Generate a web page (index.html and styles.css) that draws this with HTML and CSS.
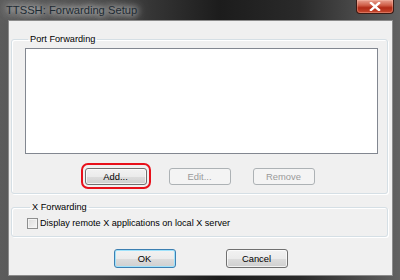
FILE: index.html
```html
<!DOCTYPE html>
<html lang="en">
<head>
  <meta charset="UTF-8">
  <title>TTSSH: Forwarding Setup</title>
  <link rel="stylesheet" href="styles.css">
</head>
<body>
  <div class="window">
    <div class="titlebar">
      <span class="title">TTSSH: Forwarding Setup</span>
      <span class="close-btn">
        <svg width="12" height="9" viewBox="0 0 12 9"><path d="M2 1 L10 8 M10 1 L2 8" stroke="#fff" stroke-width="2.4" stroke-linecap="square"/></svg>
      </span>
    </div>

    <div class="client">
      <fieldset class="group port-group">
        <legend>Port Forwarding</legend>
        <div class="listbox"></div>
        <div class="btn-row">
          <button class="btn add-btn">Add...</button>
          <button class="btn" disabled>Edit...</button>
          <button class="btn" disabled>Remove</button>
        </div>
      </fieldset>

      <fieldset class="group x-group">
        <legend>X Forwarding</legend>
        <label class="check-row">
          <span class="checkbox"></span>
          <span>Display remote X applications on local X server</span>
        </label>
      </fieldset>

      <div class="dialog-buttons">
        <button class="btn default-btn">OK</button>
        <button class="btn">Cancel</button>
      </div>
    </div>
  </div>
</body>
</html>
```

FILE: styles.css
```css
* { box-sizing: border-box; margin: 0; padding: 0; }
body {
  font-family: "Liberation Sans", Arial, sans-serif;
  font-size: 9.1px;
  color: #000;
  background: #3a3a3a;
}
.window {
  width: 400px;
  height: 280px;
  display: flex;
  flex-direction: column;
  padding: 0 7px 4px 8px;
  background: linear-gradient(90deg, #5c5c5c 0%, #484848 25%, #1c1c1c 55%, #2a2a2a 75%, #626262 100%);
}
.titlebar {
  height: 20px;
  display: flex;
  justify-content: space-between;
  align-items: flex-start;
  margin-left: -2px;
}
.title {
  font-size: 11.2px;
  line-height: 20px;
  color: #1d2a33;
  text-shadow: 0 0 6px #e8e8e8, 0 0 10px #d0d0d0, 0 0 16px #b0b0b0;
}
.close-btn {
  width: 38px;
  height: 14px;
  margin-right: -1px;
  display: flex;
  align-items: center;
  justify-content: center;
  border: 1px solid #3b1a14;
  border-top: none;
  border-radius: 0 0 4px 4px;
  background: linear-gradient(#e8a090 0%, #d0604a 40%, #b02a16 60%, #c84a30 100%);
  box-shadow: inset 0 0 0 1px rgba(255, 200, 180, 0.35);
}
.client {
  flex: 1;
  display: flex;
  flex-direction: column;
  background: #f0f0f0;
  border: 1px solid #8c8c8c;
  padding: 0 4px 0 2px;
}
.group {
  border: 1px solid #d5dfe5;
  border-radius: 3px;
  box-shadow: inset 1px 1px 0 #fff, 1px 1px 0 #fff;
  padding: 0;
}
.group legend {
  margin-left: 3px;
  padding: 0 2px;
  line-height: 13px;
  font-size: 9.2px;
  color: #000;
}
.port-group {
  margin-top: 12px;
  padding: 0 9px 8px 13px;
}
.listbox {
  margin-top: 2px;
  height: 106px;
  background: #fff;
  border: 1px solid #828790;
}
.btn-row {
  display: flex;
  justify-content: center;
  gap: 22px;
  margin-top: 14px;
  margin-left: -4px;
}
.btn {
  position: relative;
  width: 62px;
  height: 17px;
  font-family: inherit;
  font-size: 9.4px;
  color: #000;
  border: 1px solid #707070;
  border-radius: 3px;
  background: linear-gradient(#f2f2f2 0%, #ebebeb 50%, #dddddd 51%, #cfcfcf 100%);
  box-shadow: inset 0 0 0 1px rgba(255, 255, 255, 0.7);
}
.btn:disabled {
  color: #9a9a9a;
  border-color: #adb2b5;
  background: #f4f4f4;
  box-shadow: none;
}
/* marca roja alrededor del botón Add */
.add-btn::after {
  content: "";
  position: absolute;
  left: -5px;
  right: -5px;
  top: -6px;
  bottom: -5px;
  border: 2px solid #e8101a;
  border-radius: 7px;
}
.x-group {
  margin-top: 7px;
  padding: 0 8px 6px 15px;
}
.check-row {
  display: flex;
  align-items: center;
  gap: 2px;
  margin-top: 3px;
  line-height: 13px;
}
.checkbox {
  width: 11px;
  height: 11px;
  border: 1px solid #8e8f8f;
  background: linear-gradient(135deg, #dcdcdc, #f6f6f6);
  box-shadow: inset 0 0 0 1px #f4f4f4;
}
.dialog-buttons {
  display: flex;
  justify-content: center;
  gap: 50px;
  margin-top: 12px;
  margin-left: 2px;
}
.dialog-buttons .btn { height: 19px; }
.default-btn {
  border-color: #3c7fb1;
  box-shadow: inset 0 0 0 1px #9fe2fb;
}
```
